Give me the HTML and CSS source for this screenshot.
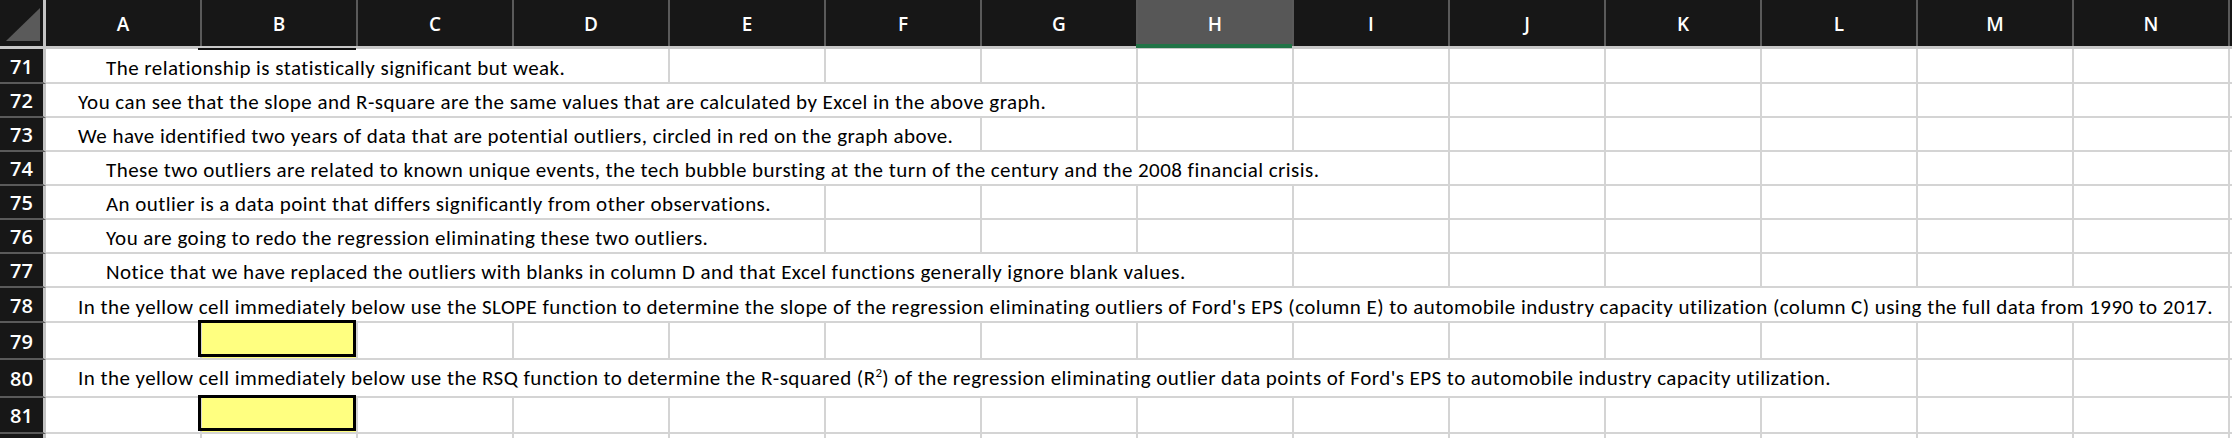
FILE: index.html
```html
<!DOCTYPE html>
<html>
<head>
<meta charset="utf-8">
<link rel="stylesheet" href="styles.css">
</head>
<body>
<div class="sheet">
  <div class="colhead">
    <div class="corner"><svg width="43" height="46" viewBox="0 0 43 46"><polygon points="6,41 40,8 40,41" fill="#5a5a5a"/></svg></div>
    <div class="ch">A</div>
    <div class="ch ch-b">B</div>
    <div class="ch">C</div>
    <div class="ch">D</div>
    <div class="ch">E</div>
    <div class="ch">F</div>
    <div class="ch">G</div>
    <div class="ch ch-sel">H</div>
    <div class="ch">I</div>
    <div class="ch">J</div>
    <div class="ch">K</div>
    <div class="ch">L</div>
    <div class="ch">M</div>
    <div class="ch">N</div>
    <div class="ch ch-rest"></div>
  </div>
  <div class="headsep"></div>

  <div class="row h35">
    <div class="rh">71</div>
    <div class="c txt ind2 s4"><span>The relationship is statistically significant but weak.</span></div>
    <div class="c"></div><div class="c"></div><div class="c"></div><div class="c"></div><div class="c"></div>
    <div class="c"></div><div class="c"></div><div class="c"></div><div class="c"></div><div class="c"></div>
    <div class="c rest"></div>
  </div>

  <div class="row">
    <div class="rh">72</div>
    <div class="c txt ind1 s7"><span>You can see that the slope and R-square are the same values that are calculated by Excel in the above graph.</span></div>
    <div class="c"></div><div class="c"></div><div class="c"></div><div class="c"></div><div class="c"></div>
    <div class="c"></div><div class="c"></div>
    <div class="c rest"></div>
  </div>

  <div class="row">
    <div class="rh">73</div>
    <div class="c txt ind1 s6"><span>We have identified two years of data that are potential outliers, circled in red on the graph above.</span></div>
    <div class="c"></div><div class="c"></div><div class="c"></div><div class="c"></div><div class="c"></div>
    <div class="c"></div><div class="c"></div><div class="c"></div>
    <div class="c rest"></div>
  </div>

  <div class="row">
    <div class="rh">74</div>
    <div class="c txt ind2 s9"><span>These two outliers are related to known unique events, the tech bubble bursting at the turn of the century and the 2008 financial crisis.</span></div>
    <div class="c"></div><div class="c"></div><div class="c"></div><div class="c"></div><div class="c"></div>
    <div class="c rest"></div>
  </div>

  <div class="row">
    <div class="rh">75</div>
    <div class="c txt ind2 s5"><span>An outlier is a data point that differs significantly from other observations.</span></div>
    <div class="c"></div><div class="c"></div><div class="c"></div><div class="c"></div><div class="c"></div>
    <div class="c"></div><div class="c"></div><div class="c"></div><div class="c"></div>
    <div class="c rest"></div>
  </div>

  <div class="row">
    <div class="rh">76</div>
    <div class="c txt ind2 s5"><span>You are going to redo the regression eliminating these two outliers.</span></div>
    <div class="c"></div><div class="c"></div><div class="c"></div><div class="c"></div><div class="c"></div>
    <div class="c"></div><div class="c"></div><div class="c"></div><div class="c"></div>
    <div class="c rest"></div>
  </div>

  <div class="row">
    <div class="rh">77</div>
    <div class="c txt ind2 s8"><span>Notice that we have replaced the outliers with blanks in column D and that Excel functions generally ignore blank values.</span></div>
    <div class="c"></div><div class="c"></div><div class="c"></div><div class="c"></div><div class="c"></div>
    <div class="c"></div>
    <div class="c rest"></div>
  </div>

  <div class="row h35">
    <div class="rh">78</div>
    <div class="c txt ind1 s14"><span>In the yellow cell immediately below use the SLOPE function to determine the slope of the regression eliminating outliers of Ford's EPS (column E) to automobile industry capacity utilization (column C) using the full data from 1990 to 2017.</span></div>
    <div class="c rest"></div>
  </div>

  <div class="row h37">
    <div class="rh">79</div>
    <div class="c"></div>
    <div class="c yel"></div>
    <div class="c"></div><div class="c"></div><div class="c"></div><div class="c"></div><div class="c"></div><div class="c"></div>
    <div class="c"></div><div class="c"></div><div class="c"></div><div class="c"></div><div class="c"></div><div class="c"></div>
    <div class="c rest"></div>
  </div>

  <div class="row h38">
    <div class="rh">80</div>
    <div class="c txt ind1 s12 raised"><span>In the yellow cell immediately below use the RSQ function to determine the R-squared (R<sup>2</sup>) of the regression eliminating outlier data points of Ford's EPS to automobile industry capacity utilization.</span></div>
    <div class="c"></div><div class="c"></div>
    <div class="c rest"></div>
  </div>

  <div class="row h36">
    <div class="rh">81</div>
    <div class="c"></div>
    <div class="c yel"></div>
    <div class="c"></div><div class="c"></div><div class="c"></div><div class="c"></div><div class="c"></div><div class="c"></div>
    <div class="c"></div><div class="c"></div><div class="c"></div><div class="c"></div><div class="c"></div><div class="c"></div>
    <div class="c rest"></div>
  </div>

  <div class="row">
    <div class="rh"></div>
    <div class="c"></div><div class="c"></div><div class="c"></div><div class="c"></div><div class="c"></div><div class="c"></div><div class="c"></div>
    <div class="c"></div><div class="c"></div><div class="c"></div><div class="c"></div><div class="c"></div><div class="c"></div><div class="c"></div>
    <div class="c rest"></div>
  </div>
</div>
</body>
</html>
```

FILE: styles.css
```css
html, body {
  margin: 0;
  padding: 0;
  background: #ffffff;
}
body {
  width: 2232px;
  height: 438px;
  overflow: hidden;
}
.sheet {
  font-family: Carlito, Calibri, "Open Sans", "Noto Sans", sans-serif;
  font-size: 21px;
  letter-spacing: 0.45px;
  font-variant-ligatures: none;
  color: #000;
}
.colhead {
  display: grid;
  grid-template-columns: 46px repeat(14, 156px) 1fr;
  height: 46px;
  background: #171717;
}
.corner {
  box-sizing: border-box;
  border-right: 3px solid #c4c4c4;
  height: 46px;
}
.corner svg { display: block; }
.ch {
  position: relative;
  box-sizing: border-box;
  border-right: 2px solid #5a5a5a;
  color: #ffffff;
  font-family: "Open Sans", "Noto Sans", sans-serif;
  font-weight: 600;
  font-size: 19px;
  letter-spacing: 0;
  display: flex;
  align-items: center;
  justify-content: center;
  padding-top: 2px;
}
.ch-rest { border-right: none; }
.ch-sel {
  background: #575757;
}
.ch-sel::after {
  content: "";
  position: absolute;
  left: -2px;
  right: 0;
  bottom: -2px;
  height: 4px;
  background: #217346;
  z-index: 2;
}
.ch-b::after {
  content: "";
  position: absolute;
  left: -4px;
  right: 0;
  bottom: -4px;
  height: 2px;
  background: #111;
  z-index: 2;
}
.headsep {
  height: 3px;
  background: #c8c8c8;
}
.row {
  display: grid;
  grid-template-columns: 46px repeat(14, 156px) 1fr;
  height: 34px;
}
.h35 { height: 35px; }
.h36 { height: 36px; }
.h37 { height: 37px; }
.h38 { height: 38px; }
.rh {
  box-sizing: border-box;
  background: #171717;
  color: #ffffff;
  border-right: 3px solid #c4c4c4;
  border-bottom: 2px solid #5a5a5a;
  font-family: "Open Sans", "Noto Sans", sans-serif;
  font-weight: 600;
  font-size: 20px;
  letter-spacing: 0;
  line-height: 26px;
  display: flex;
  align-items: center;
  justify-content: center;
  padding-top: 2px;
}
.c {
  position: relative;
  box-sizing: border-box;
  border-right: 2px solid #d4d4d4;
  border-bottom: 2px solid #d4d4d4;
}
.c.rest { border-right: none; }
.txt {
  white-space: nowrap;
  overflow: visible;
  display: flex;
  align-items: flex-end;
  line-height: 26px;
  padding-bottom: 1px;
}
.txt.raised { padding-bottom: 5px; }
.ind1 { padding-left: 32px; }
.ind2 { padding-left: 60px; }
.s4 { grid-column: span 4; }
.s5 { grid-column: span 5; }
.s6 { grid-column: span 6; }
.s7 { grid-column: span 7; }
.s8 { grid-column: span 8; }
.s9 { grid-column: span 9; }
.s12 { grid-column: span 12; }
.s14 { grid-column: span 14; }
.txt sup {
  font-size: 13px;
  line-height: 0;
  vertical-align: 8px;
  letter-spacing: 0;
}
.yel {
  background: #ffff80;
  z-index: 1;
}
.yel::after {
  content: "";
  position: absolute;
  left: -4px;
  right: 0;
  top: -3px;
  bottom: 1px;
  border: 3px solid #000;
}
```
